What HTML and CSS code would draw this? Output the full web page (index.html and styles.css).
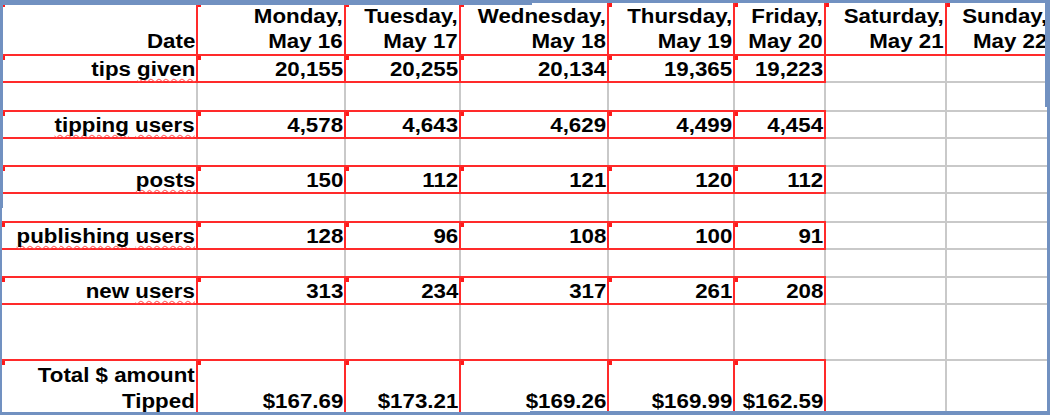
FILE: index.html
```html
<!DOCTYPE html>
<html>
<head>
<meta charset="utf-8">
<link rel="stylesheet" href="styles.css">
</head>
<body>
<div class="frame">
  <div class="sheet">
    <div class="grid">
      <div class="c h r"><span class="t">Date</span></div>
      <div class="c h r"><span class="t">Monday,<br>May 16</span></div>
      <div class="c h r"><span class="t">Tuesday,<br>May 17</span></div>
      <div class="c h r"><span class="t">Wednesday,<br>May 18</span></div>
      <div class="c h r"><span class="t">Thursday,<br>May 19</span></div>
      <div class="c h r"><span class="t">Friday,<br>May 20</span></div>
      <div class="c h r"><span class="t">Saturday,<br>May 21</span></div>
      <div class="c h r"><span class="t">Sunday,<br>May 22</span></div>

      <div class="c r"><span class="t">tips <span class="sp">given</span></span></div>
      <div class="c r"><span class="t">20,155</span></div>
      <div class="c r"><span class="t">20,255</span></div>
      <div class="c r"><span class="t">20,134</span></div>
      <div class="c r"><span class="t">19,365</span></div>
      <div class="c r"><span class="t">19,223</span></div>
      <div class="c"></div>
      <div class="c"></div>

      <div class="c"></div><div class="c"></div><div class="c"></div><div class="c"></div><div class="c"></div><div class="c"></div><div class="c"></div><div class="c"></div>

      <div class="c r"><span class="t"><span class="sp">tipping</span> <span class="sp">users</span></span></div>
      <div class="c r"><span class="t">4,578</span></div>
      <div class="c r"><span class="t">4,643</span></div>
      <div class="c r"><span class="t">4,629</span></div>
      <div class="c r"><span class="t">4,499</span></div>
      <div class="c r"><span class="t">4,454</span></div>
      <div class="c"></div>
      <div class="c"></div>

      <div class="c"></div><div class="c"></div><div class="c"></div><div class="c"></div><div class="c"></div><div class="c"></div><div class="c"></div><div class="c"></div>

      <div class="c r"><span class="t"><span class="sp">posts</span></span></div>
      <div class="c r"><span class="t">150</span></div>
      <div class="c r"><span class="t">112</span></div>
      <div class="c r"><span class="t">121</span></div>
      <div class="c r"><span class="t">120</span></div>
      <div class="c r"><span class="t">112</span></div>
      <div class="c"></div>
      <div class="c"></div>

      <div class="c"></div><div class="c"></div><div class="c"></div><div class="c"></div><div class="c"></div><div class="c"></div><div class="c"></div><div class="c"></div>

      <div class="c r"><span class="t"><span class="sp">publishing</span> <span class="sp">users</span></span></div>
      <div class="c r"><span class="t">128</span></div>
      <div class="c r"><span class="t">96</span></div>
      <div class="c r"><span class="t">108</span></div>
      <div class="c r"><span class="t">100</span></div>
      <div class="c r"><span class="t">91</span></div>
      <div class="c"></div>
      <div class="c"></div>

      <div class="c"></div><div class="c"></div><div class="c"></div><div class="c"></div><div class="c"></div><div class="c"></div><div class="c"></div><div class="c"></div>

      <div class="c r"><span class="t">new <span class="sp">users</span></span></div>
      <div class="c r"><span class="t">313</span></div>
      <div class="c r"><span class="t">234</span></div>
      <div class="c r"><span class="t">317</span></div>
      <div class="c r"><span class="t">261</span></div>
      <div class="c r"><span class="t">208</span></div>
      <div class="c"></div>
      <div class="c"></div>

      <div class="c"></div><div class="c"></div><div class="c"></div><div class="c"></div><div class="c"></div><div class="c"></div><div class="c"></div><div class="c"></div>

      <div class="c tot r"><span class="t">Total $ amount<br>Tipped</span></div>
      <div class="c tot r"><span class="t">$167.69</span></div>
      <div class="c tot r"><span class="t">$173.21</span></div>
      <div class="c tot r"><span class="t">$169.26</span></div>
      <div class="c tot r"><span class="t">$169.99</span></div>
      <div class="c tot r"><span class="t">$162.59</span></div>
      <div class="c tot"></div>
      <div class="c tot"></div>
    </div>
  </div>
  <div class="notch n-top"></div>
  <div class="notch n-left"></div>
  <div class="notch n-right"></div>
  <div class="notch n-bottom"></div>
</div>
</body>
</html>
```

FILE: styles.css
```css
html, body {
  margin: 0;
  padding: 0;
  background: #7191c1;
}

.frame {
  position: relative;
  width: 1050px;
  height: 415px;
  box-sizing: border-box;
  padding: 3px 3px 3px 2px;
  background: #7191c1;
}

.sheet {
  width: 100%;
  height: 100%;
  background: #fff;
  overflow: hidden;
}

.grid {
  display: grid;
  grid-template-columns: 194px 146px 113px 146px 124px 89px 119px 101px;
  grid-template-rows: 51px 25px 27px 25px 26px 25px 27px 25px 26px 25px 54px 53px;
  gap: 2px;
  background: #c9c9c9;
  width: max-content;
}

.c {
  background: #fff;
  display: flex;
  justify-content: flex-end;
  align-items: flex-end;
  padding: 0 1px 2px 0;
  font-family: "Liberation Sans", Arial, sans-serif;
  font-weight: bold;
  font-size: 20px;
  line-height: 20px;
  color: #000;
  white-space: nowrap;
  min-width: 0;
}

.c.r {
  outline: 2px solid #ff2a2a;
  outline-offset: 0;
  background: linear-gradient(#ff1a1a, #ff1a1a) no-repeat 0 0 / 3px 4px, #fff;
}

.c.h {
  line-height: 25px;
  padding-bottom: 0;
}

.c.tot {
  line-height: 26px;
  padding-bottom: 0;
}

.t {
  display: inline-block;
  text-align: right;
  transform: scaleX(1.115);
  transform-origin: right bottom;
}

.sp {
  text-decoration-line: underline;
  text-decoration-style: wavy;
  text-decoration-color: rgba(255, 70, 70, 0.85);
  text-decoration-thickness: 1px;
  text-underline-offset: 2px;
  text-decoration-skip-ink: none;
}

.notch {
  position: absolute;
  background: #7191c1;
}

.n-top {
  left: 0;
  top: 0;
  width: 532px;
  height: 5px;
}

.n-left {
  left: 0;
  top: 0;
  width: 3px;
  height: 208px;
}

.n-right {
  right: 0;
  top: 0;
  width: 5px;
  height: 107px;
}

.n-bottom {
  right: 0;
  bottom: 0;
  width: 520px;
  height: 4px;
}
```
